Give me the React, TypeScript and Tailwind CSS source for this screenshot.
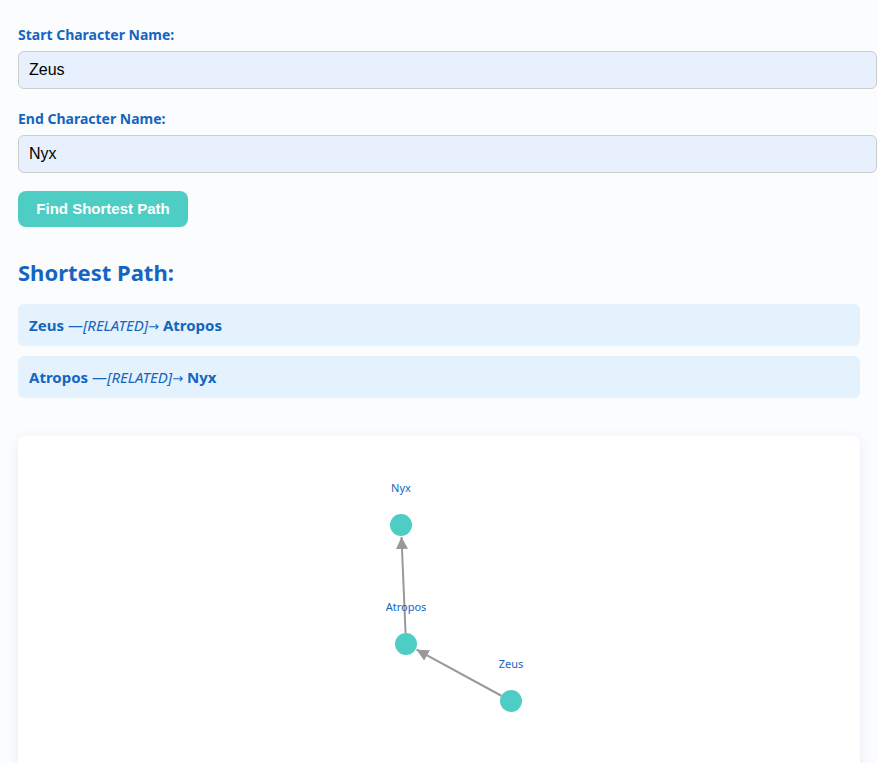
import { useState } from 'react';

const steps = [
  { from: 'Zeus', rel: 'RELATED', to: 'Atropos' },
  { from: 'Atropos', rel: 'RELATED', to: 'Nyx' },
];

const nodes = [
  { id: 'Nyx', x: 383, y: 89 },
  { id: 'Atropos', x: 388, y: 208 },
  { id: 'Zeus', x: 493, y: 265 },
];

const edges = [
  ['Zeus', 'Atropos'],
  ['Atropos', 'Nyx'],
];

function Graph() {
  const r = 11;
  const byId = (id: string) => nodes.find(n => n.id === id)!;
  return (
    <svg width="842" height="360" className="block">
      <defs>
        <marker id="arrow" viewBox="0 0 10 10" refX="10" refY="5" markerWidth="6" markerHeight="6" orient="auto">
          <path d="M0 0 L10 5 L0 10 z" fill="#999" />
        </marker>
      </defs>
      {edges.map(([a, b]) => {
        const s = byId(a), t = byId(b);
        const dx = t.x - s.x, dy = t.y - s.y;
        const len = Math.hypot(dx, dy);
        const x2 = t.x - (dx / len) * (r + 1), y2 = t.y - (dy / len) * (r + 1);
        const x1 = s.x + (dx / len) * r, y1 = s.y + (dy / len) * r;
        return <line key={a + b} x1={x1} y1={y1} x2={x2} y2={y2} stroke="#999" strokeWidth={2} markerEnd="url(#arrow)" />;
      })}
      {nodes.map(n => (
        <g key={n.id}>
          <circle cx={n.x} cy={n.y} r={r} fill="#4ecdc4" />
          <text x={n.x} y={n.y - 33} textAnchor="middle" fontSize="11" fill="#1565c0" fontFamily="'Noto Sans', sans-serif">{n.id}</text>
        </g>
      ))}
    </svg>
  );
}

export default function App() {
  const [start, setStart] = useState('Zeus');
  const [end, setEnd] = useState('Nyx');

  return (
    <div className="min-h-screen bg-[#fbfcfe] overflow-hidden" style={{ fontFamily: "'Noto Sans', sans-serif" }}>
      <div className="w-[860px] pl-[18px] pt-[24px]">
        <label className="block text-[14px] font-bold text-[#1565c0] mb-[6px]">Start Character Name:</label>
        <input value={start} onChange={e => setStart(e.target.value)}
          className="box-border block w-[859px] h-[38px] px-[10px] border border-[#ccc] rounded-[6px] bg-[#e8f0fe] text-[16px] text-black outline-none"
          style={{ fontFamily: "'Liberation Sans', Arial, sans-serif" }} />
        <label className="block text-[14px] font-bold text-[#1565c0] mt-[19px] mb-[6px]">End Character Name:</label>
        <input value={end} onChange={e => setEnd(e.target.value)}
          className="box-border block w-[859px] h-[38px] px-[10px] border border-[#ccc] rounded-[6px] bg-[#e8f0fe] text-[16px] text-black outline-none"
          style={{ fontFamily: "'Liberation Sans', Arial, sans-serif" }} />
        <button className="mt-[18px] h-[36px] w-[170px] rounded-[8px] bg-[#4ecdc4] text-white font-bold text-[15px]"
          style={{ fontFamily: "'Liberation Sans', Arial, sans-serif" }}>
          Find Shortest Path
        </button>

        <h2 className="mt-[30px] text-[22px] font-bold text-[#1565c0] leading-[30px]">Shortest Path:</h2>
        <div className="mt-[17px] flex flex-col gap-[10px]">
          {steps.map((s, i) => (
            <div key={i} className="h-[42px] flex items-center px-[11px] rounded-[6px] bg-[#e3f2fd] text-[15px] text-[#1565c0]">
              <b>{s.from}</b>
              <span className="ml-[4px]">—<i>[{s.rel}]</i><span style={{ fontFamily: "'DejaVu Sans', sans-serif" }} className="text-[13px]">→</span></span>
              <b className="ml-[4px]">{s.to}</b>
            </div>
          ))}
        </div>

        <div className="mt-[38px] bg-white rounded-[8px] shadow-[0_2px_12px_rgba(30,60,120,0.08)] h-[400px]">
          <Graph />
        </div>
      </div>
    </div>
  );
}
